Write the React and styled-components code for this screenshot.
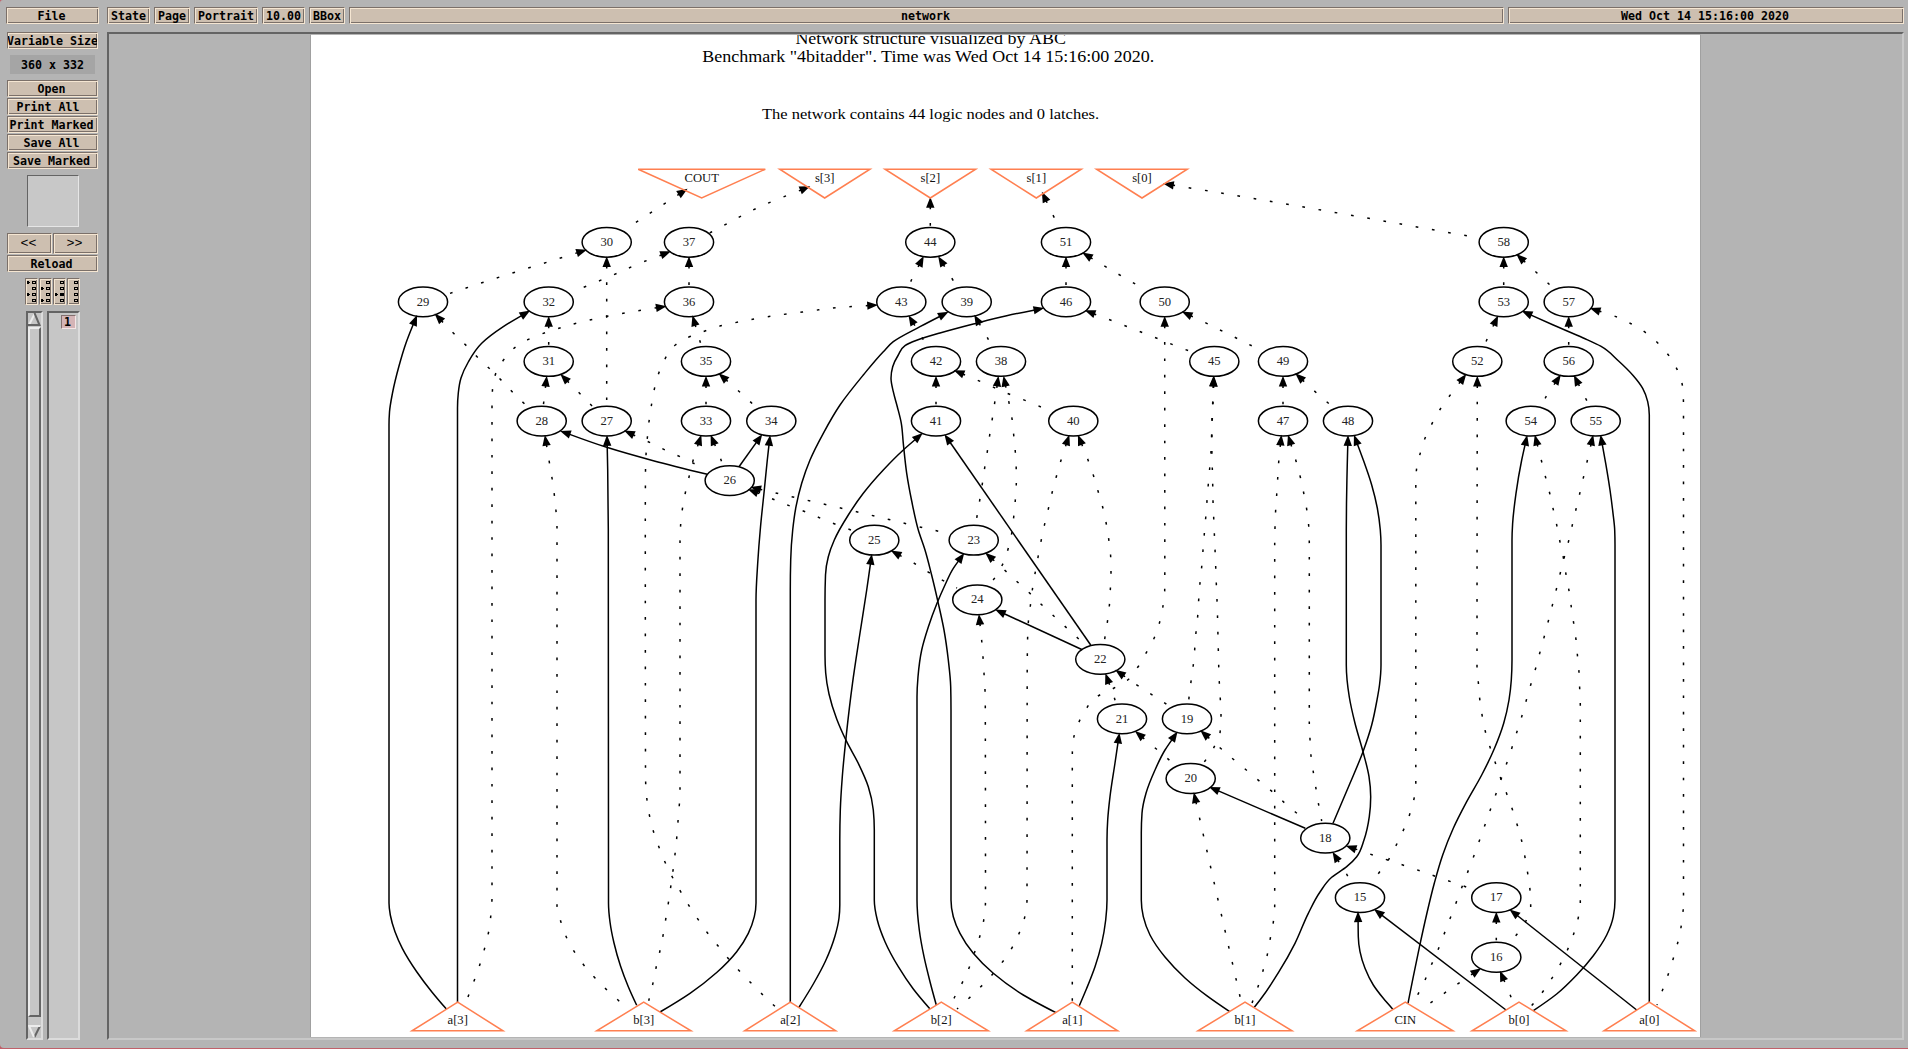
import React from "react";
import styled, { createGlobalStyle, css } from "styled-components";

const GlobalStyle = createGlobalStyle`
  html, body { margin: 0; padding: 0; background: #c0606a; overflow: hidden; }
  * { box-sizing: border-box; }
`;

const etched = css`
  background: #cdbfb0;
  border: 1px solid;
  border-color: #7b7069 #f5e6d2 #f5e6d2 #7b7069;
  box-shadow: inset 1px 1px 0 #f5e6d2, inset -1px -1px 0 #7b7069;
`;

const Window = styled.div`
  width: 1908px;
  height: 1048px;
  padding: 7px 4px 8px 6px;
  display: flex;
  flex-direction: column;
  gap: 8px;
  background: #b4b4b4;
  border-radius: 3px 0 0 4px;
  font: bold 11.63px "DejaVu Sans Mono", "Liberation Mono", monospace;
  color: #000;
`;

const TopBar = styled.div`
  display: flex;
  gap: 4px;
  height: 17px;
`;

const Button = styled.button`
  ${etched}
  display: flex;
  align-items: center;
  justify-content: center;
  width: ${(p) => (p.$w ? `${p.$w}px` : "auto")};
  height: ${(p) => p.$h || 17}px;
  margin: 0 ${(p) => p.$after || 0}px 0 0;
  padding: 1px ${(p) => p.$shift || 0}px 0 0;
  flex: none;
  overflow: hidden;
  white-space: pre;
  font: inherit;
  line-height: 14px;
  letter-spacing: ${(p) => p.$track || 0}px;
  color: inherit;
`;

const Body = styled.div`
  display: flex;
  flex: 1;
  min-height: 0;
`;

const Sidebar = styled.div`
  width: 101px;
  flex: none;
  display: flex;
  flex-direction: column;
  align-items: flex-start;
  padding-left: 1px;
`;

const SizeLabel = styled.div`
  width: 85px;
  height: 19px;
  margin: 6px 0 6px 3px;
  padding-top: 1px;
  background: #a5a5a5;
  display: flex;
  align-items: center;
  justify-content: center;
`;

const ButtonStack = styled.div`
  display: flex;
  flex-direction: column;
  gap: 1px;
`;

const Locator = styled.div`
  width: 52px;
  height: 52px;
  margin: 6px 0 6px 20px;
  background: #c8c8c8;
  border: 1px solid;
  border-color: #646464 #e6e6e6 #e6e6e6 #646464;
`;

const Pair = styled.div`
  display: flex;
  gap: 1px;
  font: normal 13.3px "Liberation Mono", monospace;
`;

const MarkRow = styled.div`
  display: flex;
  gap: 1px;
  margin: 6px 0 6px 18px;
`;

const MarkButton = styled.div`
  ${etched}
  width: 13px;
  height: 27px;
`;

const Lists = styled.div`
  display: flex;
  gap: 4px;
  margin-left: 19px;
  flex: 1;
  min-height: 0;
`;

const Sunken = styled.div`
  width: ${(p) => p.$w}px;
  display: flex;
  flex-direction: column;
  background: #c6c6c6;
  border: 2px solid;
  border-color: #646464 #dcdcdc #dcdcdc #646464;
`;

const Thumb = styled.div`
  flex: 1;
  margin: 1px 0 8px;
  border: 2px solid;
  border-color: #ececec #646464 #646464 #ececec;
`;

const PageTag = styled.div`
  width: 15px;
  height: 14px;
  margin: 2px 0 0 12px;
  padding: 0 0 0 2px;
  line-height: 13px;
  background: #d4b4b6;
  border: 1px solid;
  border-color: #83706f #f4e6e6 #f4e6e6 #83706f;
`;

const Viewport = styled.div`
  flex: 1;
  border: 2px solid;
  border-color: #646464 #c8c8c8 #c8c8c8 #646464;
  padding: 0 0 1px 201px;
  overflow: hidden;
`;

const Page = styled.div`
  width: 1391px;
  height: 100%;
  border: 1px solid #a0a0a0;
  border-top-color: #b4b4b4;
  border-bottom: 0;
  background: #fff;
  overflow: hidden;
`;

const Chart = styled.svg`
  display: block;
  font-family: "Liberation Serif", "Times New Roman", serif;
  font-weight: normal;
`;

const rowY = (r) => 242.3 + 59.58 * r;

const NODES = [
  [[606.7, 30], [689, 37], [930.3, 44], [1066, 51], [1503.7, 58]],
  [[423, 29], [548.7, 32], [689, 36], [901.3, 43], [966.7, 39], [1066, 46], [1164.7, 50], [1503.7, 53], [1568.7, 57]],
  [[548.7, 31], [706, 35], [936, 42], [1001, 38], [1214.3, 45], [1283, 49], [1477.3, 52], [1568.7, 56]],
  [[541.7, 28], [606.7, 27], [706, 33], [771.3, 34], [936, 41], [1073.3, 40], [1283, 47], [1348, 48], [1530.7, 54], [1595.7, 55]],
  [[729.7, 26]],
  [[874.3, 25], [973.7, 23]],
  [[977.3, 24]],
  [[1100.3, 22]],
  [[1122, 21], [1187, 19]],
  [[1190.7, 20]],
  [[1325.3, 18]],
  [[1360, 15], [1496.3, 17]],
  [[1496.3, 16]],
];

const OUTPUTS = [
  ["COUT", 638.2, 701.7, 765.3],
  ["s[3]", 779.7, 824.7, 870],
  ["s[2]", 885, 930.3, 975.7],
  ["s[1]", 991, 1036.3, 1081.3],
  ["s[0]", 1096.5, 1142, 1187.3],
];

const INPUTS = [
  ["a[3]", 412, 457.7, 503],
  ["b[3]", 596.7, 643.7, 691],
  ["a[2]", 744.7, 790.3, 835.7],
  ["b[2]", 894.3, 941.3, 988.3],
  ["a[1]", 1026.7, 1072.3, 1117.7],
  ["b[1]", 1198, 1245, 1292],
  ["CIN", 1357.3, 1405.3, 1453],
  ["b[0]", 1472, 1519, 1566],
  ["a[0]", 1604, 1649.3, 1694.7],
];

// Each edge runs from its arrow tip back to its tail.
const SOLID = [
  "416.7,316 413,325 406,343 399,366 392.5,393 389.5,412 389,425 389,903 390.3,915 395,931.7 402.3,948.3 416.7,971.7 431.7,991.7 446.3,1009",
  "529.3,311 503.3,326.7 481.7,343.3 468.3,362 461,378 458.3,393 457.5,408 457.5,1002",
  "561,431.3 606.7,447.3 653.3,460.7 707.3,474.3",
  "607,436 607.7,470 608.3,530 608.5,903 610,922 614,943 620.5,966 628.3,986.7 636.7,1005.3",
  "761.7,435 739,466.7",
  "770,436 767.3,460 764.3,490 760.5,527 757.7,563.3 756,600 756,903 754.3,916.7 748.3,933.3 736.7,951.7 716.7,972.5 690,993.3 660,1012",
  "947.7,312.3 920,326.7 893.3,341.7 883.3,351.7 863.3,375 840,405 823.3,433.3 810,460 801.7,483.3 796,506.7 792.7,530 790.7,560 790.3,590 790.3,1002",
  "1043.3,308.3 1006.7,315.7 973.3,324 940,333 916.7,340.3 905,345.7 898.3,355 892.7,366.7 891,378.3 893.3,391.7 897.3,406.7 901.3,423.3 903.3,443.3 906.7,473.3 911.7,501 918.3,530 925,550 931.5,574.5 938.3,603.3 944,630 948.3,660 950.7,686.7 951,710 951,900 953.3,916.7 960,933.3 973.3,953.3 993.3,973.3 1023.3,995 1056,1012.7",
  "922,433.7 903.3,450 883.3,470 863.3,493.3 848.3,515 834.3,540 828.3,556.7 825.5,575 825,600 825,655 825.7,673 829,694 836.7,719 846.7,741.7 858.3,763.3 868.3,786.7 873.3,810 874.3,830 874.3,900 877.3,920 885,941.7 898.3,966.7 913.3,989 930,1009",
  "945,435 1090.7,645",
  "871.7,555 866.7,590 859.7,635 852.5,683.3 846.5,733.3 842.3,776.7 840.3,810 839.8,840 839.8,905 839,918 835,936 825.5,961 813.3,984 799,1007.3",
  "963.7,553.7 953.3,568.3 945,585 937,603.3 928.3,627 921.7,650 918,676.7 917,697 917,900 919.3,930 924,956.7 930,981.7 936.3,1005",
  "996,610 1082.3,649.7",
  "1119.3,733.7 1115,763 1110,796.7 1107.7,820 1107,840 1107,900 1105.7,920 1101.7,943.3 1095,966.7 1086.7,988.3 1079.3,1005.7",
  "1177,732.3 1165,750 1155,770 1146,793.3 1142,813.3 1141.3,833 1141.3,900 1143.3,916.7 1150,935 1165,957 1185,978 1206.7,995.7 1229.7,1011.7",
  "1210,787.3 1305.3,828.3",
  "1348,436 1347.3,463 1346.5,503 1346.3,530 1346.3,665 1349.3,697 1355,723.3 1363,751.7 1369,776.7 1370.7,796.7 1369.3,816.7 1364,840 1356.7,856.7 1346.7,866.7 1331.7,877.3 1320,892 1308.3,913.3 1295,943.3 1279,971.7 1260,1000 1254.3,1007.3",
  "1354.3,435.7 1363.3,460 1371.7,485 1377.3,508 1380.3,530 1381,545 1381,665 1379.5,685 1377,700 1371.7,725 1363,751.7 1350,783.3 1333,823.3",
  "1522.7,311.3 1553.3,325 1583.3,338 1600.7,346.2 1618.3,360.7 1633.3,375.7 1642.7,388.3 1647.7,401.7 1649.3,415 1649.3,1002",
  "1358,912.3 1358.3,936.7 1360,951.7 1365,968.3 1373.3,985 1383.3,998.3 1392.7,1009",
  "1374.7,909.7 1506,1010",
  "1510.3,910 1636.7,1010",
  "1527,436 1521.7,460 1516,493.3 1512.6,524 1512,540 1512,660 1511.3,680 1509,700 1503.7,723.3 1494.5,748.3 1481.7,775 1466.7,801.7 1453.3,828.3 1442.7,855 1434.3,883.3 1426.5,915 1419.5,946.7 1413.3,976.7 1408,1003.3",
  "1600.7,435.7 1605.7,463.3 1610,490 1613,513.3 1614.7,530 1615,545 1615,900 1613.3,916.7 1606.7,935 1593.3,955.7 1576.7,975 1556.7,994 1533.3,1010.7",
];

const DOTTED = [
  "686.7,189.3 629,226.8",
  "809.3,186.7 760,206.7 717.7,228.7 709,233.3",
  "930.3,198 930.3,227",
  "1042.3,192.7 1054.3,217.7 1060,228",
  "1164,183.7 1192.3,188.3 1334,212.3 1479,238",
  "586,250 558.3,258.7 524.3,269.3 490.3,280 456.3,291.3 450,293.4",
  "606.7,257.3 606.7,406",
  "670,251.7 643,262 610.7,276 577.7,289.7 572,292",
  "689,257.3 689,287",
  "435.3,314.3 454.3,334 467,346.3 479,358.7 491.3,370.3 503.7,382.7 515.3,395 528,407",
  "548.7,317 548.7,346.5",
  "665.7,306.3 636.7,311 602.3,317.3 584.3,321.3 567.3,325.7 550.3,331 533.7,337 518,345.3 505.7,357.3 496.7,371.3 492.7,387.3 492,403.3 492,897 491,913.3 489,930 485.3,945.7 480.7,962 475.3,977.7 469.3,993.3 465,1006",
  "692.7,316.3 700.3,342.3 701.5,346",
  "546.7,376.7 543.7,402.3 543.3,406",
  "561,374.7 580,393.7 592.3,406.3",
  "545,436 549.3,462 552,478 554.3,494.7 556,511 557,528 557,905 560.7,921.3 566.3,937 574.3,951.7 584.3,965.7 595.3,978.3 607.7,990.7 620.7,1002.7 627,1010",
  "625,431 650.3,442.7 666.7,450.7 682.3,457.7 698.7,465.7 706,469",
  "706,376.7 706,406",
  "719.3,374 740,392.3 752.7,404 757,408",
  "711,435.7 721.3,460.7 723,466",
  "701,435.7 693,460.7 689,477 685.3,493 682.3,509.7 680.5,527 680,545 680,790 679.3,805.3 678,821.3 676.7,838.3 675,854.3 673,870.7 670.7,887 668.3,903.3 665.7,919.3 663,935.7 659.7,952 656,968 652.7,984.3 648.7,1000.7",
  "751.3,487.3 779.3,493.8 814.3,501.9 849,510 884,518.3 918.7,526.7 951,534",
  "748.8,489.5 775.3,500 791.7,506.7 808.3,513 824.7,520 851,530",
  "877,305 848.7,306.7 830.7,308.3 812.7,310.7 794.7,313 777,315.3 759.3,318 742,321.3 724.3,325 707,330.3 690.7,336.3 675.3,345 665.3,358.3 658.7,373.3 654.3,389.3 651.3,406 649,421.7 647.3,438.3 646,455 645.5,471.3 645.3,520.7 645.5,770 645.7,784 647,800 649.7,816.7 653.7,832.3 659.3,848 665.7,863.7 673,878.3 681.3,892.7 690,907.3 699.7,921.7 709.3,935.3 720,948.3 731,961.7 742.3,974 754.7,986.7 766.3,998.3 779,1010",
  "923.3,257 911.3,280.3 909,286",
  "938.7,257 952.3,279 957,287",
  "909,316 923.3,339.7 927,347",
  "974.7,315.7 988.3,339.3 992,346.5",
  "1066,257.3 1066,287",
  "1083,253 1106.7,267.3 1122,276.3 1137,285 1144,289.5",
  "1085.7,310.7 1112,320.7 1129,327.3 1145.3,333.7 1162,340.3 1178,346.7 1192,352",
  "1164.7,317 1164.8,573 1164.7,590 1163,606 1159.7,622 1154.3,637.7 1146.3,652.7 1137.7,667.3 1127.3,680.3 1112.3,689 1096.7,696.7 1085.7,709.7 1078,724.3 1073.3,740.3 1072.3,756.3 1072.3,1002",
  "1182.7,312 1208,324 1224,332 1239.7,339.7 1255.7,347.7 1264,351.5",
  "936,376.7 936,406",
  "954.7,370.7 981,381.7 1013,395.7 1030,402.3 1046,409.3 1052,412",
  "998.3,376.7 994.7,402.7 992.3,418.7 989.7,435 987.3,451.7 984.7,467.7 982.3,484 979.7,500.3 977,516.3 975.5,525",
  "1003.7,376.7 1009,402.7 1012,418.7 1013.7,435 1015.3,451.7 1016.2,468 1016.3,484 1015.3,500.3 1013.7,517 1011.7,533.3 1008,549.3 1002.3,565 993.7,579.3 988,586",
  "1069,435.7 1060.7,461.3 1056.3,476.7 1052,493 1048.3,509 1044.3,525.7 1041,541.3 1038,557.3 1035,573.7 1032.3,590 1030.3,606.3 1028.3,622.7 1027.6,639 1027.2,673 1027,900 1024.3,918.7 1018.7,934.3 1011.3,949 1001.7,963 991,976 979.3,988.3 966.3,1000.7 957,1009",
  "1078.3,435.7 1088.3,460.7 1093.7,476.3 1098.3,492 1103,508.3 1106.3,524 1109,541.3 1110.7,557.3 1111,573.7 1110.3,590 1109.3,606.3 1107.3,622.7 1104.7,639 1104,644",
  "891.7,551 916,564.3 931,573.7 957,588",
  "986,553.3 1006.7,572 1019.3,583.7 1031.7,595 1044,607 1057,619 1069.7,630.7 1082.3,642 1086,645",
  "979,615 981.7,640.7 983,657 984,673.3 985,690 985.3,706.7 985.5,900 983.7,920.3 979.7,936.7 974.7,952 969.3,967.3 962.3,982.7 954.3,997.7 951,1005",
  "1105.7,674.3 1114.7,699 1116,704",
  "1116,670.3 1138.7,686.3 1154,696 1168.7,706 1171,708",
  "1135.7,731.7 1156.7,749.3 1170,760.7 1175,765",
  "1201,731 1221.7,749.3 1235,760.7 1248.3,771.7 1261.3,782.7 1274.3,793.3 1287.7,805.7 1301,816.7 1306,821",
  "1213.5,376.7 1212.7,402.7 1212,418.7 1211.6,435 1211,451.7 1209.7,468.3 1208.3,484.3 1207,500.7 1205.7,517.7 1204.3,534 1203,550.3 1201.7,566.7 1200,583 1198.7,599.7 1197.7,616 1196,632.3 1193.3,665 1191,681.7 1189,697.7 1188.5,703",
  "1214,376.7 1213,402.7 1212.3,418.7 1211.9,435 1211.9,451.7 1212.3,468.3 1212.7,484.3 1213,500.7 1213.7,518 1215.7,566.7 1216.3,583.3 1217,599.7 1218.3,649.3 1219.3,682.3 1220.3,699 1221,714.7 1220.2,731.3 1214.3,746.7 1205,761 1202,765",
  "1283,376.7 1283,406",
  "1296,374 1316.3,392.7 1329.3,404 1334,408",
  "1281.3,435.7 1278.7,462 1277.7,478.3 1276.7,494.7 1275.7,509.3 1275,527.3 1274.7,545 1274.7,905 1273.3,922.3 1270.3,938.3 1267.3,954.7 1263,970.7 1258,986.7 1252.3,1002.3 1251.5,1005",
  "1288.3,435.7 1296,461 1300.3,477 1303.7,493 1306.7,509.3 1308.8,527.7 1309.3,545 1309.3,723 1310,739.3 1311,755.7 1313.3,772 1316,788.7 1318.7,805 1321.7,821",
  "1194,793.3 1199.7,818.7 1241.5,1003",
  "1497.7,316.3 1486.3,341 1484,347",
  "1503.7,257.3 1503.7,287",
  "1517,254.7 1537.3,273.3 1550,285 1554,289",
  "1568.7,317 1568.7,346.5",
  "1590.7,308.3 1617.7,317.3 1633.3,325 1648,334.3 1661,346.3 1671.7,359.7 1679.3,374.7 1683,390.3 1683.5,407 1683.5,905 1682.3,916.7 1680,933.3 1676,949 1671.3,965 1666,980.7 1660.3,996 1657,1005",
  "1465.7,374.7 1449.3,396.3 1439.7,410 1431.3,425 1424.3,440 1419.7,455.3 1416.3,471.7 1415.8,488 1415.8,784 1413.7,800.3 1409,816.3 1402.7,831.7 1395.3,847 1387.5,861.3 1377.3,875 1371,884",
  "1477.3,376.7 1477,665.7 1478.3,682 1479.7,698.7 1482,714.7 1485.3,731.3 1490,747 1495.3,762.7 1500.7,778.3 1506.7,793.7 1512.3,809.3 1517.3,825.3 1521.7,841 1525,857.3 1527.7,873.3 1530,890 1530.7,906.3 1525.7,921.3 1515.7,935.7 1508,944",
  "1346.7,846 1372.7,855 1406.7,866.3 1440.3,878 1475,890",
  "1333,852.7 1347.3,875.3 1351,883",
  "1496.3,912.7 1496.3,942",
  "1480.3,968.7 1457.3,984.3 1442.7,994.3 1428.3,1004.3 1424,1007",
  "1500.3,971.7 1510.7,996.3 1513,1003",
  "1535,435.7 1541.7,461.7 1545.7,477.7 1549.7,493.3 1553.3,509.7 1557,526.3 1560,542 1563.5,558.3 1566,574.3 1569,590.7 1571.3,607 1573.7,623.3 1576,639.7 1577.5,656 1579,672.3 1579.7,689 1580.3,705.3 1580.3,903 1578,919 1573.3,935 1567.3,950.3 1559.7,965.3 1551,979.7 1541.3,993.7 1530.7,1006.7",
  "1593,435.7 1587,462 1583.3,478 1579.7,493.7 1575.8,510 1572,526.3 1568.3,542.3 1564,558.3 1560,574.3 1556,590.7 1552,606.7 1548,622.3 1543.7,638.7 1539.3,654.7 1535,670.7 1530.3,686.3 1525.8,702 1521.3,718 1516.3,733.7 1511.3,749.7 1506,765.3 1500.7,780.3 1495,796.7 1489.3,812.7 1484,827.7 1478.3,843.7 1472.7,859 1466.7,874.7 1460.7,890.3 1455,905.7 1449,921.3 1443,937 1437,952.3 1430.3,967.3 1423.7,983 1416.3,998.3 1414,1006",
  "1560.3,375.3 1545.3,398 1541,408",
  "1574.3,376 1586.3,399.7 1590,407",
];

const HEAD = 8.5;
const parse = (s) => s.split(" ").map((p) => p.split(",").map(Number));
const f = (n) => n.toFixed(2);

// Cubic interpolation that is monotone in y, so long vertical runs stay straight.
function curve(pts) {
  const n = pts.length;
  if (n === 2) return `M${pts[0].map(f)}L${pts[1].map(f)}`;
  const h = [];
  const s = [];
  for (let i = 0; i < n - 1; i++) {
    h.push(Math.max(pts[i + 1][1] - pts[i][1], 0.01));
    s.push((pts[i + 1][0] - pts[i][0]) / h[i]);
  }
  const t = new Array(n);
  for (let i = 1; i < n - 1; i++) {
    const p = (s[i - 1] * h[i] + s[i] * h[i - 1]) / (h[i - 1] + h[i]);
    t[i] = (Math.sign(s[i - 1]) + Math.sign(s[i])) * Math.min(Math.abs(s[i - 1]), Math.abs(s[i]), 0.5 * Math.abs(p));
  }
  t[0] = (3 * s[0] - t[1]) / 2;
  t[n - 1] = (3 * s[n - 2] - t[n - 2]) / 2;
  let d = `M${pts[0].map(f)}`;
  for (let i = 0; i < n - 1; i++) {
    const k = h[i] / 3;
    const [x0, y0] = pts[i];
    const [x1, y1] = pts[i + 1];
    d += `C${f(x0 + k * t[i])},${f(y0 + k)} ${f(x1 - k * t[i + 1])},${f(y1 - k)} ${f(x1)},${f(y1)}`;
  }
  return d;
}

function Edge({ points, dotted }) {
  const pts = parse(points);
  const [tx, ty] = pts[0];
  const dx = pts[1][0] - tx;
  const dy = pts[1][1] - ty;
  const len = Math.hypot(dx, dy);
  const ux = dx / len;
  const uy = dy / len;
  const bx = tx + ux * (HEAD + 1.3);
  const by = ty + uy * (HEAD + 1.3);
  const sx = tx - ux;
  const sy = ty - uy;
  const start = [tx + ux * HEAD, ty + uy * HEAD];
  const rest = len > HEAD + 1 ? pts.slice(1) : pts.slice(2);
  return (
    <g>
      <path d={curve([start, ...rest])} fill="none" stroke="#000" strokeWidth="1.5" strokeDasharray={dotted ? "2.7 13.75" : undefined} />
      <polygon points={`${f(sx)},${f(sy)} ${f(bx - uy * 4.2)},${f(by + ux * 4.2)} ${f(bx + uy * 4.2)},${f(by - ux * 4.2)}`} fill="#000" />
    </g>
  );
}

function Node({ x, y, label }) {
  return (
    <g>
      <ellipse cx={x} cy={y} rx="24.6" ry="14.9" fill="none" stroke="#000" strokeWidth="1.5" />
      <text x={x} y={y + 3.7} textAnchor="middle" fontSize="12.6" fill="#222">{label}</text>
    </g>
  );
}

function Port({ label, left, mid, right, down }) {
  const base = down ? 169.2 : 1030.8;
  const apex = down ? 198 : 1002.2;
  return (
    <g>
      <polygon points={`${left},${base} ${right},${base} ${mid},${apex}`} fill="none" stroke="#ff7f50" strokeWidth="1.5" />
      <text x={mid} y={down ? 182.3 : 1024.3} textAnchor="middle" fontSize="12.6" fill="#111">{label}</text>
    </g>
  );
}

function Network() {
  return (
    <Chart width="1389" height="1002" viewBox="311 35 1389 1002">
      <text x="795.4" y="44.4" fontSize="16.6" textLength="270.5" lengthAdjust="spacingAndGlyphs">Network structure visualized by ABC</text>
      <text x="702.2" y="62.4" fontSize="16.6" textLength="452" lengthAdjust="spacingAndGlyphs">Benchmark "4bitadder". Time was Wed Oct 14 15:16:00 2020.</text>
      <text x="762" y="119.3" fontSize="15.4" textLength="337" lengthAdjust="spacingAndGlyphs">The network contains 44 logic nodes and 0 latches.</text>
      {DOTTED.map((p) => <Edge key={p} points={p} dotted />)}
      {SOLID.map((p) => <Edge key={p} points={p} />)}
      {NODES.map((row, r) => row.map(([x, label]) => <Node key={label} x={x} y={rowY(r)} label={label} />))}
      {OUTPUTS.map(([label, left, mid, right]) => <Port key={label} label={label} left={left} mid={mid} right={right} down />)}
      {INPUTS.map(([label, left, mid, right]) => <Port key={label} label={label} left={left} mid={mid} right={right} />)}
    </Chart>
  );
}

function MarkIcon({ arrows = [], filled }) {
  return (
    <MarkButton>
      <svg width="11" height="25" viewBox="0 0 11 25" shapeRendering="crispEdges" style={{ display: "block" }}>
        {[0, 1, 2, 3].map((i) => (
          <g key={i}>
            <rect x="6.5" y={2.5 + i * 6} width="3" height="2" fill={filled === i ? "#000" : "none"} stroke="#000" />
            {arrows.includes(i) && <path d={`M1 ${2 + i * 6}h2v1h1v1h-1v1h-2z`} />}
          </g>
        ))}
      </svg>
    </MarkButton>
  );
}

function ScrollArrow({ down }) {
  return (
    <svg width="13" height="13" viewBox="0 0 13 13" style={{ display: "block", flex: "none" }}>
      {down ? (
        <>
          <path d="M12 1L6.5 12" stroke="#646464" strokeWidth="2" />
          <path d="M12.5 1H1L6 12" fill="none" stroke="#ececec" strokeWidth="2" />
        </>
      ) : (
        <>
          <path d="M6.5 1L1 12" stroke="#ececec" strokeWidth="2" />
          <path d="M6.5 0L11.5 12H0" fill="none" stroke="#646464" strokeWidth="2" />
        </>
      )}
    </svg>
  );
}

export default function App() {
  return (
    <>
      <GlobalStyle />
      <Window>
        <TopBar>
          <Button $w={93} $after={4} $shift={2}>File</Button>
          <Button $w={43}>State</Button>
          <Button $w={36}>Page</Button>
          <Button $w={64}>Portrait</Button>
          <Button $w={43}>10.00</Button>
          <Button $w={36}>BBox</Button>
          <Button $w={1155} $shift={2}>network</Button>
          <Button $w={396} $shift={2}>Wed Oct 14 15:16:00 2020</Button>
        </TopBar>
        <Body>
          <Sidebar>
            <Button $w={91}>Variable Size</Button>
            <SizeLabel>360 x 332</SizeLabel>
            <ButtonStack>
              <Button $w={91} $shift={2}>Open</Button>
              <Button $w={91} $shift={9}>Print All</Button>
              <Button $w={91} $shift={2}>Print Marked</Button>
              <Button $w={91} $shift={2}>Save All</Button>
              <Button $w={91} $shift={2}>Save Marked</Button>
            </ButtonStack>
            <Locator />
            <ButtonStack>
              <Pair>
                <Button $w={45} $h={21} $shift={2}>{"<<"}</Button>
                <Button $w={45} $h={21} $shift={2}>{">>"}</Button>
              </Pair>
              <Button $w={91} $shift={2}>Reload</Button>
            </ButtonStack>
            <MarkRow>
              <MarkIcon arrows={[0, 2]} />
              <MarkIcon arrows={[1, 3]} />
              <MarkIcon arrows={[2]} filled={2} />
              <MarkIcon />
            </MarkRow>
            <Lists>
              <Sunken $w={17}>
                <ScrollArrow />
                <Thumb />
                <ScrollArrow down />
              </Sunken>
              <Sunken $w={33}>
                <PageTag>1</PageTag>
              </Sunken>
            </Lists>
          </Sidebar>
          <Viewport>
            <Page>
              <Network />
            </Page>
          </Viewport>
        </Body>
      </Window>
    </>
  );
}
